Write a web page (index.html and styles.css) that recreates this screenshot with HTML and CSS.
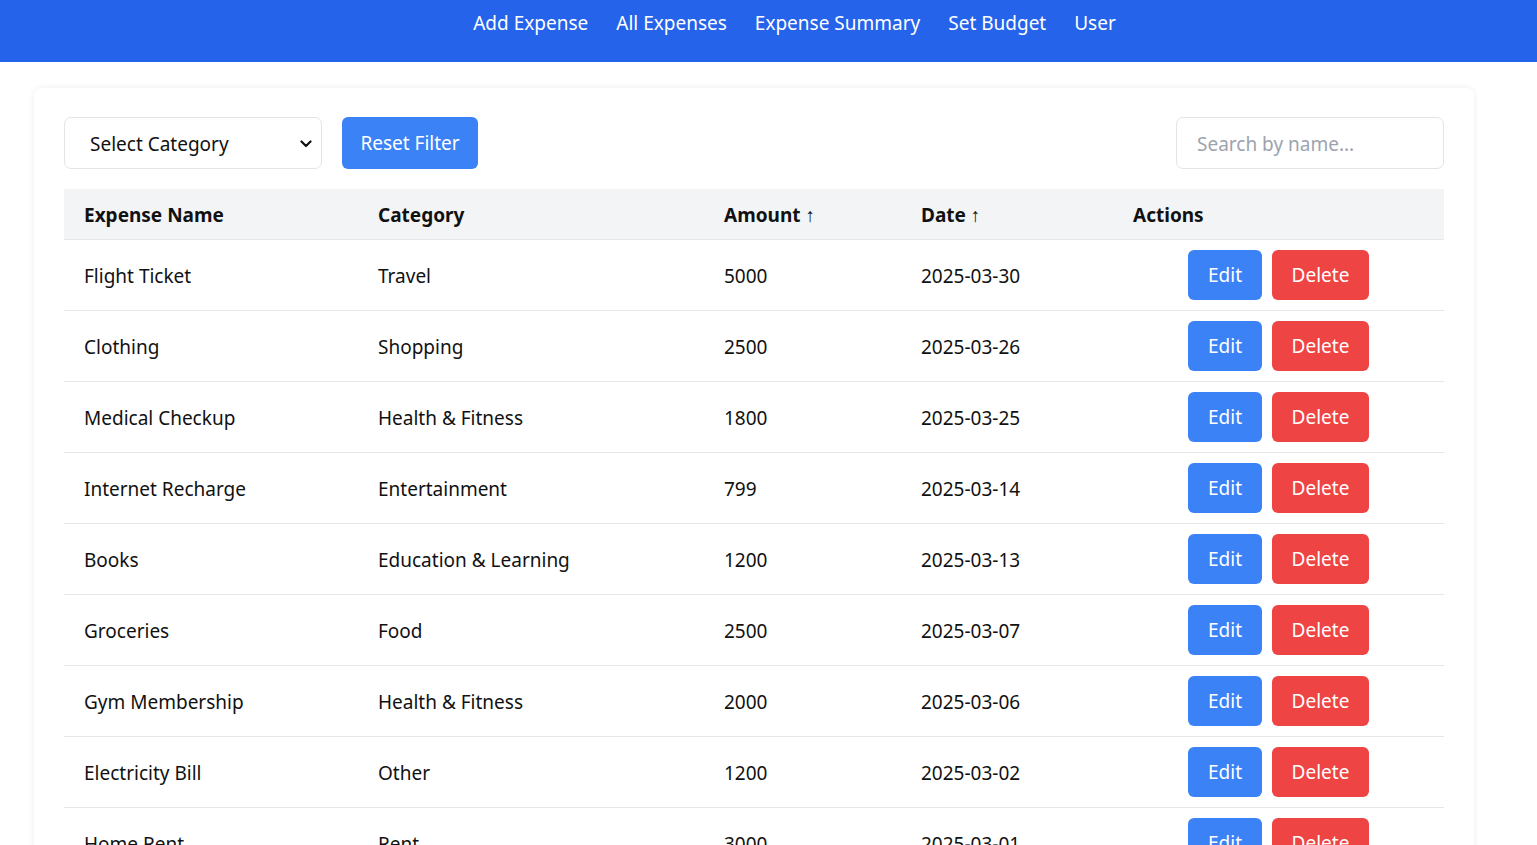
FILE: index.html
```html
<!DOCTYPE html>
<html lang="en">
<head>
<meta charset="utf-8">
<title>Expenses</title>
<link rel="stylesheet" href="styles.css">
</head>
<body>
<nav class="topbar">
  <a class="nav-link" href="#">Add Expense</a>
  <a class="nav-link" href="#">All Expenses</a>
  <a class="nav-link" href="#">Expense Summary</a>
  <a class="nav-link" href="#">Set Budget</a>
  <a class="nav-link" href="#">User</a>
</nav>
<main class="page">
  <section class="card">
    <div class="toolbar">
      <div class="filters">
        <div class="select">
          <span>Select Category</span>
          <svg class="chev" width="12" height="8" viewBox="0 0 12 8"><path d="M1.5 1.5 L6 6 L10.5 1.5" fill="none" stroke="#111" stroke-width="2.2" stroke-linecap="round" stroke-linejoin="round"/></svg>
        </div>
        <button class="btn btn-blue btn-reset">Reset Filter</button>
      </div>
      <div class="search">Search by name...</div>
    </div>
    <table class="table">
      <colgroup>
        <col class="c1"><col class="c2"><col class="c3"><col class="c4"><col class="c5">
      </colgroup>
      <thead>
        <tr><th>Expense Name</th><th>Category</th><th>Amount ↑</th><th>Date ↑</th><th>Actions</th></tr>
      </thead>
      <tbody>
        <tr><td>Flight Ticket</td><td>Travel</td><td>5000</td><td>2025-03-30</td><td class="actions"><button class="btn btn-blue">Edit</button><button class="btn btn-red">Delete</button></td></tr>
        <tr><td>Clothing</td><td>Shopping</td><td>2500</td><td>2025-03-26</td><td class="actions"><button class="btn btn-blue">Edit</button><button class="btn btn-red">Delete</button></td></tr>
        <tr><td>Medical Checkup</td><td>Health &amp; Fitness</td><td>1800</td><td>2025-03-25</td><td class="actions"><button class="btn btn-blue">Edit</button><button class="btn btn-red">Delete</button></td></tr>
        <tr><td>Internet Recharge</td><td>Entertainment</td><td>799</td><td>2025-03-14</td><td class="actions"><button class="btn btn-blue">Edit</button><button class="btn btn-red">Delete</button></td></tr>
        <tr><td>Books</td><td>Education &amp; Learning</td><td>1200</td><td>2025-03-13</td><td class="actions"><button class="btn btn-blue">Edit</button><button class="btn btn-red">Delete</button></td></tr>
        <tr><td>Groceries</td><td>Food</td><td>2500</td><td>2025-03-07</td><td class="actions"><button class="btn btn-blue">Edit</button><button class="btn btn-red">Delete</button></td></tr>
        <tr><td>Gym Membership</td><td>Health &amp; Fitness</td><td>2000</td><td>2025-03-06</td><td class="actions"><button class="btn btn-blue">Edit</button><button class="btn btn-red">Delete</button></td></tr>
        <tr><td>Electricity Bill</td><td>Other</td><td>1200</td><td>2025-03-02</td><td class="actions"><button class="btn btn-blue">Edit</button><button class="btn btn-red">Delete</button></td></tr>
        <tr><td>Home Rent</td><td>Rent</td><td>3000</td><td>2025-03-01</td><td class="actions"><button class="btn btn-blue">Edit</button><button class="btn btn-red">Delete</button></td></tr>
      </tbody>
    </table>
  </section>
</main>
</body>
</html>
```
FILE: styles.css
```css
* { box-sizing: border-box; }
html, body { margin: 0; padding: 0; }
body {
  font-family: "Noto Sans", "Open Sans", sans-serif;
  color: #111;
  background: #fff;
  overflow: hidden;
}
.topbar {
  height: 62px;
  background: #2563eb;
  display: flex;
  justify-content: center;
  gap: 28px;
  padding-top: 9px;
  padding-left: 52px;
}
.nav-link {
  color: #fff;
  text-decoration: none;
  font-size: 19px;
  line-height: 28px;
  height: 28px;
}
.page {
  padding: 26px 63px 0 34px;
}
.card {
  background: #fff;
  border-radius: 8px;
  box-shadow: 0 0 6px rgba(0,0,0,0.08);
  padding: 29px 30px 30px 30px;
}
.toolbar {
  display: flex;
  justify-content: space-between;
  align-items: center;
  margin-bottom: 20px;
}
.filters {
  display: flex;
  gap: 20px;
  align-items: center;
}
.select {
  width: 258px;
  height: 52px;
  border: 1px solid #e2e4e8;
  border-radius: 7px;
  display: flex;
  align-items: center;
  justify-content: space-between;
  padding: 0 9px 0 25px;
  font-size: 19px;
}
.select span { padding-top: 2px; }
.chev { margin-top: 1px; }
.search {
  width: 268px;
  height: 52px;
  border: 1px solid #e2e4e8;
  border-radius: 7px;
  display: flex;
  align-items: center;
  padding: 2px 20px 0;
  font-size: 19px;
  color: #9ca3af;
}
.btn {
  font-family: inherit;
  border: none;
  border-radius: 6px;
  color: #fff;
  font-size: 19px;
  cursor: pointer;
  height: 50px;
  padding: 0 19px;
}
.btn-reset { height: 52px; width: 136px; padding: 0; }
.btn-blue { background: #3b82f6; }
.btn-red { background: #ef4444; }
.table {
  width: 100%;
  border-collapse: collapse;
  table-layout: fixed;
  font-size: 19px;
}
.c1 { width: 294px; }
.c2 { width: 346px; }
.c3 { width: 197px; }
.c4 { width: 212px; }
.c5 { width: 331px; }
.table th {
  background: #f3f4f6;
  text-align: left;
  font-weight: 700;
  height: 50px;
  padding: 2px 20px 0;
  border-bottom: 1px solid #e5e7eb;
}
.table td {
  height: 71px;
  padding: 2px 20px 0;
  border-bottom: 1px solid #e5e7eb;
}
.table td.actions {
  text-align: center;
  padding: 1px 0 0;
  white-space: nowrap;
}
.actions .btn { width: 74px; padding: 0; }
.actions .btn + .btn { margin-left: 10px; width: 97px; }
```
